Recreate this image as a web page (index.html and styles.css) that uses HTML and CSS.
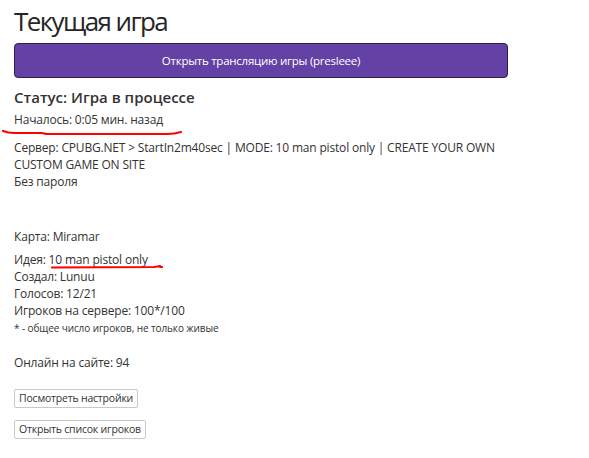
FILE: index.html
```html
<!DOCTYPE html>
<html>
<head>
<meta charset="utf-8">
<link rel="stylesheet" href="styles.css">
</head>
<body>
<div class="page">
  <h1 class="title">Текущая игра</h1>
  <button class="stream-btn">Открыть трансляцию игры (presleee)</button>
  <h4 class="status">Статус: Игра в процессе</h4>
  <p class="started">Началось: 0:05 мин. назад</p>
  <p class="server">Сервер: CPUBG.NET &gt; StartIn2m40sec | MODE: 10 man pistol only | CREATE YOUR OWN CUSTOM GAME ON SITE<br>Без пароля<br><br><br></p>
  <p class="info map">Карта: Miramar</p>
  <p class="info">Идея: 10 man pistol only<br>Создал: Lunuu<br>Голосов: 12/21<br>Игроков на сервере: 100*/100<br><span class="note">* - общее число игроков, не только живые</span></p>
  <p class="info online">Онлайн на сайте: 94</p>
  <div class="actions">
    <button class="small-btn">Посмотреть настройки</button>
    <button class="small-btn">Открыть список игроков</button>
  </div>
  <svg class="mark mark-1" width="190" height="10" viewBox="0 0 190 10"><path d="M3 3 Q8 5 14 5 L40 5 Q44 5 46 6 L168 6 Q174 6 181 4" fill="none" stroke="#ff0000" stroke-width="2.2" stroke-linecap="round"/></svg>
  <svg class="mark mark-2" width="120" height="8" viewBox="0 0 120 8"><path d="M2 4.5 L104 4 Q108 3.5 110 3 M110 4 L112 4" fill="none" stroke="#ff0000" stroke-width="2.2" stroke-linecap="round"/></svg>
</div>
</body>
</html>
```
FILE: styles.css
```css
html, body {
  margin: 0;
  padding: 0;
  background: #ffffff;
}
.page {
  position: relative;
  width: 494px;
  padding: 0 14px;
  font-family: "Open Sans", "Noto Sans", sans-serif;
  font-size: 12px;
  line-height: 17px;
  letter-spacing: -0.18px;
  color: #333333;
}
.title {
  margin: 0;
  padding-top: 4px;
  font-size: 26px;
  line-height: 34px;
  font-weight: 500;
  letter-spacing: -1.6px;
  color: #262626;
}
.stream-btn {
  display: block;
  width: 494px;
  height: 35px;
  margin-top: 5px;
  background: #6441a5;
  border: 1px solid #2e1f4d;
  border-radius: 4px;
  color: #ffffff;
  font-family: inherit;
  font-size: 11.5px;
  letter-spacing: -0.25px;
  padding: 0;
}
.status {
  margin: 9px 0 0;
  font-size: 15px;
  line-height: 20px;
  font-weight: 600;
  letter-spacing: 0;
  color: #333333;
}
.started {
  margin: 4px 0 0;
  font-size: 12px;
  line-height: 18px;
}
.server {
  margin: 10px 0 0;
}
.info {
  margin: 6px 0 0;
}
.map {
  margin-top: 4px;
}
.note {
  font-size: 10px;
  letter-spacing: -0.1px;
}
.online {
  margin-top: 17px;
}
.actions {
  display: flex;
  flex-direction: column;
  align-items: flex-start;
  gap: 12px;
  margin-top: 18px;
}
.small-btn {
  background: #ffffff;
  border: 1px solid #c8c8c8;
  border-radius: 2px;
  font-family: inherit;
  font-size: 10.5px;
  line-height: 15px;
  letter-spacing: -0.2px;
  padding: 1px 4px;
  color: #333333;
}
.mark {
  position: absolute;
}
.mark-1 {
  left: 0;
  top: 128px;
}
.mark-2 {
  left: 50px;
  top: 263px;
}
```
